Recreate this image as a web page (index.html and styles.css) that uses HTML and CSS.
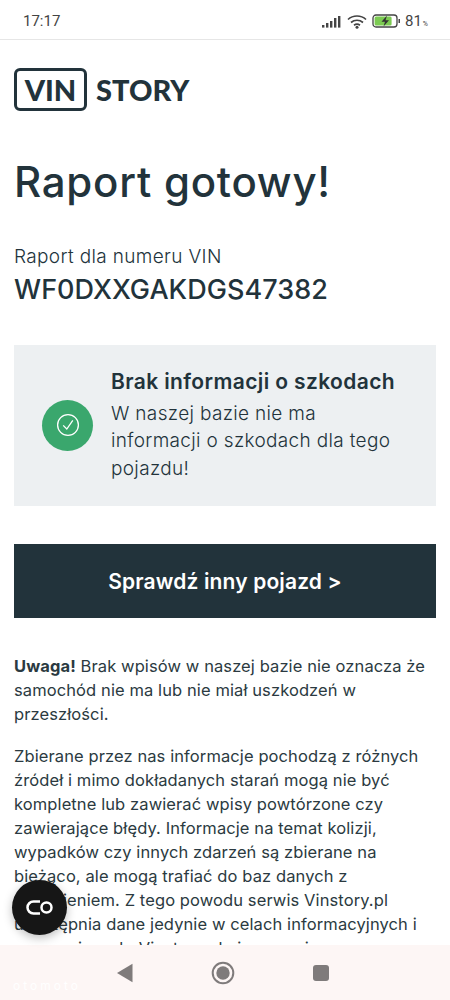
FILE: index.html
```html
<!DOCTYPE html>
<html lang="pl">
<head>
<meta charset="utf-8">
<title>Raport gotowy</title>
<link rel="stylesheet" href="styles.css">
</head>
<body>
<div class="status">
  <span class="clock">17:17</span>
  <div class="status-icons">
    <svg width="21" height="13" viewBox="0 0 21 13"><g fill="#444"><rect x="1" y="10" width="2.4" height="2.6"/><rect x="5" y="8" width="2.4" height="4.6"/><rect x="9" y="6" width="2.4" height="6.6"/><rect x="13" y="3" width="2.4" height="9.6"/><rect x="17" y="1" width="2.4" height="11.6"/></g></svg>
    <svg width="20" height="15" viewBox="0 0 20 15"><g fill="none" stroke="#444" stroke-width="1.7"><path d="M1 5.5C6 .8 14 .8 19 5.5"/><path d="M4 8.5C7.5 5.5 12.5 5.5 16 8.5"/><path d="M7 11.2C8.8 10 11.2 10 13 11.2"/></g><circle cx="10" cy="13.2" r="1.5" fill="#444"/></svg>
    <svg width="29" height="14" viewBox="0 0 29 14"><rect x="1" y="1" width="24" height="12" rx="3" fill="#fff" stroke="#444" stroke-width="1.3"/><rect x="2.6" y="2.6" width="17" height="8.8" rx="1.5" fill="#7ccb52"/><path d="M15 1.5L9.5 7.8H13L11.500 12.5L17 6.200H13.500Z" fill="#333"/><rect x="26.500" y="5" width="1.500" height="4" fill="#444"/></svg>
    <span class="batt">81<small>%</small></span>
  </div>
</div>

<div class="page">
  <div class="logo">
    <span class="logo-box">VIN</span>
    <span class="logo-word">STORY</span>
  </div>

  <h1>Raport gotowy!</h1>

  <p class="vin-label">Raport dla numeru VIN</p>
  <p class="vin-number">WF0DXXGAKDGS47382</p>

  <div class="result">
    <div class="result-icon">
      <svg width="24" height="24" viewBox="0 0 24 24"><circle cx="12" cy="12" r="10.400" fill="none" stroke="#fff" stroke-width="1.300"/><path d="M7.200 12.400L10.800 16L16.800 7.400" fill="none" stroke="#fff" stroke-width="1.300"/></svg>
    </div>
    <div class="result-text">
      <h2>Brak informacji o szkodach</h2>
      <p>W naszej bazie nie ma<br>informacji o szkodach dla tego<br>pojazdu!</p>
    </div>
  </div>

  <a class="btn" href="#">Sprawdź inny pojazd &gt;</a>

  <div class="notes">
    <p><b>Uwaga!</b> Brak wpisów w naszej bazie nie oznacza że<br>samochód nie ma lub nie miał uszkodzeń w<br>przeszłości.</p>
    <p>Zbierane przez nas informacje pochodzą z różnych<br>źródeł i mimo dokładanych starań mogą nie być<br>kompletne lub zawierać wpisy powtórzone czy<br>zawierające błędy. Informacje na temat kolizji,<br>wypadków czy innych zdarzeń są zbierane na<br>bieżąco, ale mogą trafiać do baz danych z<br>opóźnieniem. Z tego powodu serwis Vinstory.pl<br>udostępnia dane jedynie w celach informacyjnych i<br>pomocniczych. Vinstory.pl nie ponosi</p>
  </div>
</div>

<div class="fab">
  <svg width="28" height="15" viewBox="0 0 28 15"><path d="M14 1.500H7.500a6 6 0 0 0 0 12H14" fill="none" stroke="#fff" stroke-width="2.500"/><circle cx="20.500" cy="7.500" r="5" fill="none" stroke="#fff" stroke-width="2.500"/></svg>
</div>

<div class="navbar">
  <svg width="18" height="20" viewBox="0 0 18 20"><path d="M16.500 .8V19.200L1 10Z" fill="#7f7b7b"/></svg>
  <svg width="24" height="24" viewBox="0 0 24 24"><circle cx="12" cy="12" r="10.300" fill="none" stroke="#7f7b7b" stroke-width="2"/><circle cx="12" cy="12" r="6.700" fill="#7f7b7b"/></svg>
  <svg width="18" height="18" viewBox="0 0 18 18"><rect x="1" y="1" width="16" height="16" rx="3" fill="#7f7b7b"/></svg>
  <span class="watermark">otomoto</span>
</div>
</body>
</html>
```
FILE: styles.css
```css
*{box-sizing:border-box;}
html,body{margin:0;padding:0;height:1000px;overflow:hidden;background:#fff;}
body{position:relative;font-family:"Inter","Liberation Sans",sans-serif;color:#22333b;}
p,h1,h2{margin:0;}

.status{height:40px;display:flex;align-items:center;justify-content:space-between;padding:3px 22px 0 23px;border-bottom:1px solid #e6e6e6;color:#444;font-family:"Roboto",sans-serif;font-size:15px;}
.status-icons{display:flex;align-items:center;gap:5px;}
.batt{font-size:15px;margin-left:-1px;}
.batt small{font-size:7px;margin-left:1px;}

.page{padding:28px 14px 0;}

.logo{display:flex;align-items:center;gap:9px;height:43px;font-family:"Lato",sans-serif;font-weight:900;font-size:29px;color:#22333b;}
.logo-box{width:73px;height:43px;border:3px solid #22333b;border-radius:6px;display:flex;align-items:center;justify-content:center;}

h1{margin-top:43px;font-weight:500;font-size:42px;line-height:56px;letter-spacing:.75px;color:#22333b;}

.vin-label{margin-top:34px;font-size:19px;line-height:26px;font-weight:300;letter-spacing:.35px;}
.vin-number{margin-top:2px;font-size:27px;line-height:36px;font-weight:500;letter-spacing:.05px;}

.result{margin-top:37px;height:161px;background:#edf0f2;display:flex;align-items:center;padding:0 14px 0 28px;gap:18px;}
.result-icon{width:51px;height:51px;border-radius:50%;background:#3aa76d;display:flex;align-items:center;justify-content:center;flex:none;margin-top:-1px;}
.result-text h2{font-size:21px;line-height:30px;font-weight:600;letter-spacing:.38px;margin-bottom:3px;margin-top:-2px;}
.result-text p{font-size:19px;line-height:27.500px;font-weight:300;letter-spacing:.33px;}

.btn{display:flex;align-items:center;justify-content:center;margin-top:38px;height:74px;background:#22333b;color:#fff;font-size:21px;font-weight:600;letter-spacing:.15px;text-decoration:none;}

.notes{margin-top:36px;font-size:16.500px;line-height:24px;font-weight:400;letter-spacing:.1px;color:#2b3a41;}
.notes p{margin-bottom:18px;}

.fab{position:absolute;left:12px;top:880px;width:55px;height:55px;border-radius:50%;background:#161616;display:flex;align-items:center;justify-content:center;box-shadow:0 3px 10px rgba(0,0,0,.25);z-index:2;}

.navbar{position:absolute;left:0;right:0;bottom:0;height:55px;background:#fdf6f5;display:flex;align-items:center;justify-content:center;gap:77px;padding:0 4px 0 0;}
.watermark{position:absolute;left:13px;bottom:7px;font-size:12px;letter-spacing:3px;color:#fff;}
```
